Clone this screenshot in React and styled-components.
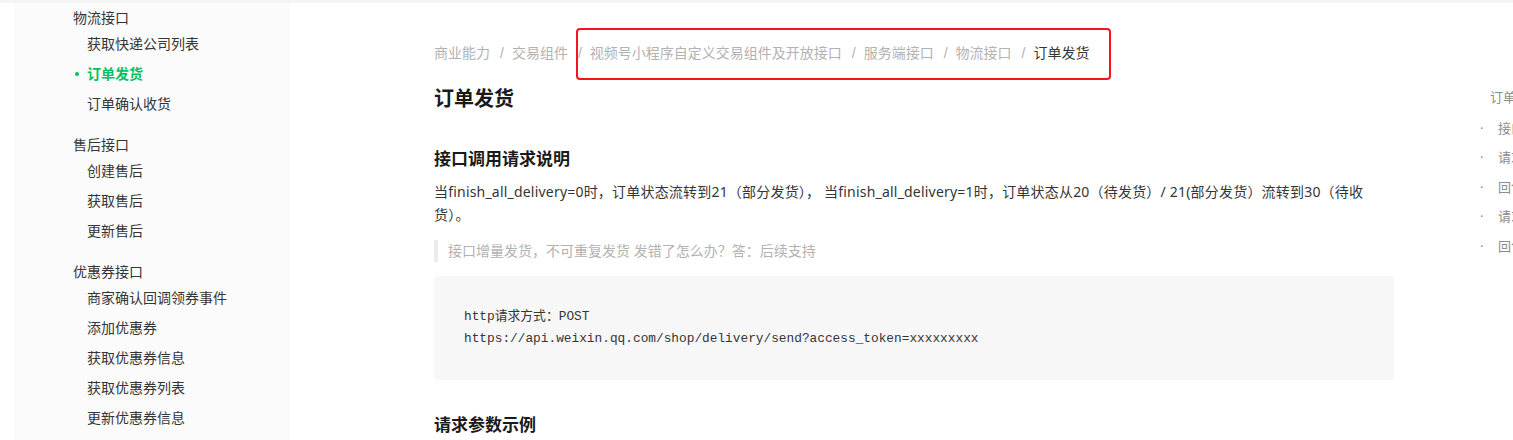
import React from 'react';
import styled, { createGlobalStyle } from 'styled-components';

const GlobalStyle = createGlobalStyle`
  html, body {
    margin: 0;
    padding: 0;
    background: #fff;
    overflow: hidden;
  }
  body {
    font-family: "Noto Sans", "Noto Sans CJK SC", sans-serif;
    color: #353535;
    font-size: 14px;
  }
`;

const sidebar = [
  {
    title: '物流接口',
    items: ['获取快递公司列表', '订单发货', '订单确认收货'],
  },
  {
    title: '售后接口',
    items: ['创建售后', '获取售后', '更新售后'],
  },
  {
    title: '优惠券接口',
    items: ['商家确认回调领券事件', '添加优惠券', '获取优惠券信息', '获取优惠券列表', '更新优惠券信息'],
  },
];

const crumbs = ['商业能力', '交易组件', '视频号小程序自定义交易组件及开放接口', '服务端接口', '物流接口', '订单发货'];

const toc = ['接口调用请求说明', '请求参数示例', '回包示例', '请求参数说明', '回包参数说明'];

export default function App() {
  return (
    <Page>
      <GlobalStyle />
      <TopStrip />
      <Layout>
        <Sidebar>
          {sidebar.map(group => (
            <Group key={group.title}>
              <GroupTitle>{group.title}</GroupTitle>
              {group.items.map(item => (
                <NavItem key={item} active={item === '订单发货'}>{item}</NavItem>
              ))}
            </Group>
          ))}
        </Sidebar>

        <Main>
          <Breadcrumb>
            {crumbs.map((c, i) => (
              <React.Fragment key={c}>
                {i > 0 && <Sep>/</Sep>}
                <Crumb current={i === crumbs.length - 1}>{c}</Crumb>
              </React.Fragment>
            ))}
            <Highlight />
          </Breadcrumb>

          <Title>订单发货</Title>

          <SectionTitle>接口调用请求说明</SectionTitle>
          <Para>
            当finish_all_delivery=0时，订单状态流转到21（部分发货）， 当finish_all_delivery=1时，订单状态从20（待发货）/ 21(部分发货）流转到30（待收货）。
          </Para>
          <Quote>接口增量发货，不可重复发货 发错了怎么办？答：后续支持</Quote>

          <CodeBlock>
            <code>http请求方式：POST</code>
            <code>https://api.weixin.qq.com/shop/delivery/send?access_token=xxxxxxxxx</code>
          </CodeBlock>

          <SectionTitle spaced>请求参数示例</SectionTitle>
        </Main>

        <Toc>
          <TocTitle>订单发货</TocTitle>
          {toc.map(t => (
            <TocItem key={t}>{t}</TocItem>
          ))}
        </Toc>
      </Layout>
    </Page>
  );
}

const Page = styled.div`
  width: 1513px;
  height: 440px;
  overflow: hidden;
`;

const TopStrip = styled.div`
  height: 3px;
  background: #f4f4f4;
`;

const Layout = styled.div`
  display: flex;
  align-items: flex-start;
`;

const Sidebar = styled.nav`
  flex: 0 0 276px;
  margin-left: 14px;
  padding: 4px 0 0 59px;
  box-sizing: border-box;
  min-height: 437px;
  background: #fbfbfb;
`;

const Group = styled.div`
  margin-bottom: 15px;
`;

const GroupTitle = styled.div`
  line-height: 22px;
  font-size: 14px;
  color: #353535;
`;

const NavItem = styled.div`
  position: relative;
  padding-left: 14px;
  line-height: 30px;
  font-size: 14px;
  white-space: nowrap;
  color: ${p => (p.active ? '#07c160' : '#353535')};
  font-weight: ${p => (p.active ? 700 : 400)};

  &::before {
    content: '';
    display: ${p => (p.active ? 'block' : 'none')};
    position: absolute;
    left: 2px;
    top: 13px;
    width: 4px;
    height: 4px;
    border-radius: 50%;
    background: #07c160;
  }
`;

const Main = styled.main`
  flex: 0 0 960px;
  margin-left: 144px;
`;

const Breadcrumb = styled.div`
  position: relative;
  margin-top: 39px;
  line-height: 22px;
  font-size: 14px;
  font-family: "Liberation Sans", "Noto Sans CJK SC", sans-serif;
  white-space: nowrap;
`;

const Crumb = styled.span`
  color: ${p => (p.current ? '#353535' : '#b2b2b2')};
`;

const Sep = styled.span`
  color: #b2b2b2;
  padding: 0 8px 0 10px;
`;

const Highlight = styled.span`
  position: absolute;
  left: 142px;
  top: -14px;
  width: 535px;
  height: 52px;
  box-sizing: border-box;
  border: 2px solid #f5141e;
  border-radius: 4px;
  pointer-events: none;
`;

const Title = styled.h1`
  margin: 21px 0 0;
  font-size: 20px;
  line-height: 28px;
  font-weight: 700;
  color: #1a1a1a;
`;

const SectionTitle = styled.h3`
  margin: ${p => (p.spaced ? '33px' : '34px')} 0 0;
  font-size: 17px;
  line-height: 24px;
  font-weight: 700;
  color: #1a1a1a;
`;

const Para = styled.p`
  margin: 9px 0 0;
  font-size: 14px;
  line-height: 23px;
  letter-spacing: 0.2px;
  color: #353535;
`;

const Quote = styled.blockquote`
  margin: 14px 0 0;
  padding-left: 10px;
  border-left: 4px solid #ececec;
  line-height: 22px;
  font-size: 14px;
  color: #b2b2b2;
`;

const CodeBlock = styled.pre`
  margin: 14px 0 0;
  padding: 30px;
  background: #f7f7f7;
  border-radius: 4px;
  display: flex;
  flex-direction: column;

  code {
    font-family: "Liberation Mono", "Noto Sans CJK SC", monospace;
    font-size: 12.8px;
    line-height: 22px;
    color: #353535;
  }
`;

const Toc = styled.aside`
  flex: 0 0 180px;
  margin: 84px 0 0 86px;
  font-size: 13px;
  color: #8c8c8c;
`;

const TocTitle = styled.div`
  padding-left: 10px;
  line-height: 20px;
  margin-bottom: 7px;
  white-space: nowrap;
`;

const TocItem = styled.div`
  line-height: 29.4px;
  white-space: nowrap;

  &::before {
    content: '·';
    display: inline-block;
    width: 18px;
  }
`;
